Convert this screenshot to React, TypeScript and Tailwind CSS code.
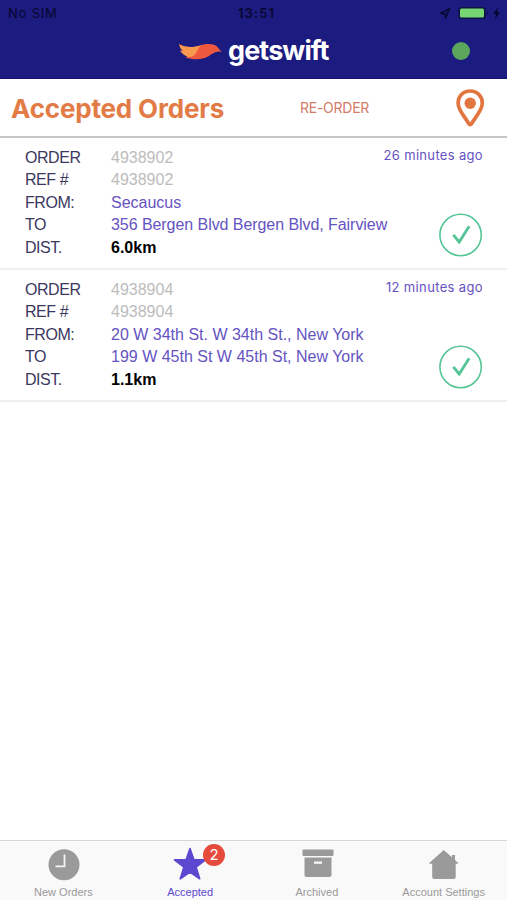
import type { ReactNode } from "react";

const arial = "font-['Liberation_Sans',Arial,sans-serif]";

type Order = { id: string; ago: string; agoClass: string; from: string; to: string; toClass: string; dist: string };

const orders: Order[] = [
  { id: "4938902", ago: "26 minutes ago", agoClass: "tracking-[0.33px]", from: "Secaucus", to: "356 Bergen Blvd Bergen Blvd, Fairview", toClass: "tracking-[-0.06px]", dist: "6.0km" },
  { id: "4938904", ago: "12 minutes ago", agoClass: "tracking-[0.36px]", from: "20 W 34th St. W 34th St., New York", to: "199 W 45th St W 45th St, New York", toClass: "", dist: "1.1km" },
];

function Row({ label, children }: { label: string; children: ReactNode }) {
  return (
    <div className="flex h-[22.5px] items-center whitespace-nowrap">
      <span className="w-[86px] shrink-0 tracking-[-0.45px] text-[#3b3760]">{label}</span>
      {children}
    </div>
  );
}

function OrderCard({ order }: { order: Order }) {
  return (
    <article className={`flex h-[132px] justify-between border-b-2 border-[#efefef] pr-[24px] pl-[25px] text-[16px] leading-[22px] ${arial}`}>
      <div className="w-[370px] pt-[8.4px]">
        <Row label="ORDER"><span className="text-[#bcbcbc]">{order.id}</span></Row>
        <Row label="REF #"><span className="text-[#bcbcbc]">{order.id}</span></Row>
        <Row label="FROM:"><span className="text-[#6553c1]">{order.from}</span></Row>
        <Row label="TO"><span className={`text-[#6553c1] ${order.toClass}`}>{order.to}</span></Row>
        <Row label="DIST."><span className="font-bold text-black">{order.dist}</span></Row>
      </div>
      <div className="flex w-[88px] flex-col items-end justify-between pt-[7px] pb-[11px]">
        <time className={`font-['Inter',sans-serif] text-[13px] leading-[20px] whitespace-nowrap text-[#6553c1] ${order.agoClass}`}>{order.ago}</time>
        <svg width="44" height="44" viewBox="0 0 44 44" fill="none" stroke="#56c596">
          <circle cx="21.6" cy="22" r="20.7" strokeWidth="1.6" />
          <path d="M14.3 21.8 20.2 29 30.2 13.2" strokeWidth="2.8" />
        </svg>
      </div>
    </article>
  );
}

function Tab({ label, color, children }: { label: string; color: string; children: ReactNode }) {
  return (
    <div className={`flex flex-1 flex-col items-center ${color}`}>
      <div className="flex h-[45px] pt-[5px]">{children}</div>
      <span className={`text-[11px] leading-[16px] whitespace-nowrap ${arial}`}>{label}</span>
    </div>
  );
}

export default function App() {
  return (
    <main className="flex h-[900px] w-[507px] flex-col overflow-hidden bg-white font-['Inter',sans-serif]">
      <header className="h-[79px] shrink-0 border-b border-[#17136a] bg-[#1c1b80]">
        <div className="grid h-[28px] grid-cols-3 items-center pr-[4px] pl-[8px] text-[13px] text-[#07072d]">
          <span className="tracking-[0.8px]">No SIM</span>
          <span className="pl-[2px] text-center font-semibold tracking-[1.1px]">13:51</span>
          <svg className="justify-self-end" width="64" height="16" viewBox="0 0 64 16">
            <path d="M1.5 7.3 10.5 2.8 6.5 12 5.9 7.8Z" fill="none" stroke="#07072d" strokeWidth="1.4" strokeLinejoin="round" />
            <rect x="19.3" y="1" width="27.5" height="12" rx="2.5" fill="#0a1545" />
            <rect x="21" y="2.6" width="24" height="8.8" rx="1.5" fill="#76d672" />
            <path d="M48.3 5.3v3.5q2-1.7 0-3.5Z" fill="#07072d" />
            <path d="m58.9 1.5-5 6.5h3.2L56 13l5.2-6.8h-3.3Z" fill="#07072d" />
          </svg>
        </div>
        <div className="flex h-[46px] items-center justify-between pr-[37px] pl-[178px]">
          <div className="flex items-center">
            <svg width="45" height="20" viewBox="0 0 45 20">
              <path d="M1.2 3.3C9 7.5 16 6 22 4.4 29 2.5 35 2.3 39 5.5 41 7.5 42 9.5 44 11 38 9.5 35 12.5 31 15 24 19 15 19.2 7.5 16.2L10 15.5C6 14.5 3.500 12 2 9.500L5 10.200C2.800 8 1.500 5.800 1.200 3.300Z" fill="#ee583f" />
              <path d="M1.2 3.3C9 7.500 16 6 23.500 4.200 18.500 7 19.500 14 13 15.800 11.500 16.200 9 16.500 7.500 16.200L10 15.500C6 14.500 3.500 12 2 9.500L5 10.200C2.800 8 1.500 5.800 1.200 3.300Z" fill="#f79a50" />
            </svg>
            <span className="ml-[5px] text-[27px] leading-[32px] font-bold tracking-[-0.9px] text-white">getswift</span>
          </div>
          <span className="h-[18px] w-[18px] rounded-full bg-[#59a65c]" />
        </div>
      </header>

      <section className="flex h-[59px] shrink-0 items-center border-b-2 border-[#c6c6c6] pl-[11px]">
        <h1 className="w-[289px] pt-[2px] text-[26px] leading-[32px] font-bold tracking-[-0.17px] whitespace-nowrap text-[#e37b46]">Accepted Orders</h1>
        <span className="w-[155px] text-[14px] tracking-[-0.25px] whitespace-nowrap text-[#d47b69]">RE-ORDER</span>
        <svg width="30" height="40" viewBox="0 0 30 40">
          <path d="M15.2 3C8 3 3.1 8.2 3.1 15 3.1 22.2 9.7 28.5 13.7 35.5q1.5 2.3 3 0C20.7 28.5 27.3 22.2 27.3 15 27.3 8.2 22.4 3 15.2 3Z" fill="none" stroke="#e37640" strokeWidth="3.7" />
          <circle cx="15.2" cy="15.3" r="5.7" fill="#e37640" />
        </svg>
      </section>

      <div className="flex-1">
        {orders.map((order) => <OrderCard key={order.id} order={order} />)}
      </div>

      <nav className="flex h-[60px] shrink-0 border-t border-[#d6d6d6] bg-[#f9f9f9]">
        <Tab label="New Orders" color="text-[#9a9a9a]">
          <svg width="38" height="38" viewBox="0 0 38 38"><circle cx="20" cy="18.8" r="15.5" fill="currentColor" /><path d="M20.5 8.5v11.800h-9" fill="none" stroke="#f4f4f4" strokeWidth="1.8" /></svg>
        </Tab>
        <Tab label="Accepted" color="text-[#5b48cf]">
          <div className="relative">
            <svg width="38" height="38" viewBox="0 0 38 38"><path d="m19 2.500 3.900 11.200 11.600.1-9.400 7.200 3.600 11.800L19 26 9.300 32.800 12.900 21l-9.400-7.200 11.600-.1Z" fill="currentColor" stroke="currentColor" strokeWidth="1.6" strokeLinejoin="round" /></svg>
            <span className="absolute -top-[2px] left-[32px] flex h-[22px] w-[22px] items-center justify-center rounded-full bg-[#e54b3c] text-[15px] text-white">2</span>
          </div>
        </Tab>
        <Tab label="Archived" color="text-[#9a9a9a]">
          <svg width="38" height="38" viewBox="0 0 38 38"><rect x="4.5" y="3.5" width="31" height="6.5" rx="1" fill="currentColor" /><path fillRule="evenodd" d="M6.500 11.500h27v17.500q0 2-2 2h-23q-2 0-2-2ZM16 15.500v2.200h8v-2.200Z" fill="currentColor" /></svg>
        </Tab>
        <Tab label="Account Settings" color="text-[#9a9a9a]">
          <svg width="38" height="38" viewBox="0 0 38 38"><path d="M18.7 4 27 11.300V9h3v5l3.200 2.900v.8H30.700V31q0 2-2 2H9.200q-2 0-2-2V17.700H4.300v-.8Z" fill="currentColor" /></svg>
        </Tab>
      </nav>
    </main>
  );
}
